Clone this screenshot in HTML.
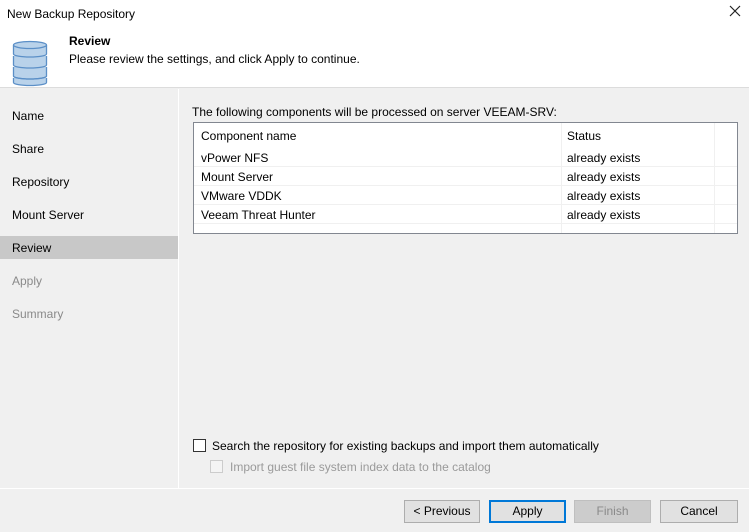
<!DOCTYPE html>
<html><head><style>
*{margin:0;padding:0;box-sizing:border-box}
body{width:749px;height:532px;overflow:hidden;background:#f0f0f0;font-family:"Liberation Sans",Arial,sans-serif;font-size:12px;color:#000;position:relative}
.a{position:absolute;white-space:nowrap}
.hdr{left:0;top:0;width:749px;height:88px;background:#fff;border-bottom:1px solid #dcdcdc}
.nav{font-size:12px}
.btn{position:absolute;top:500px;height:23px;width:78px;background:#e1e1e1;border:1px solid #adadad;text-align:center;line-height:21px;font-size:12px}
</style></head><body>
<div class="a hdr"></div>
<div class="a" style="left:7px;top:7px;font-size:12px">New Backup Repository</div>
<svg class="a" style="left:729px;top:5px" width="12" height="12" viewBox="0 0 12 12"><path d="M1 1L11 11M11 1L1 11" stroke="#222" stroke-width="1.2"/></svg>
<svg class="a" style="left:12px;top:40px" width="38" height="48" viewBox="0 0 38 48">
<g fill="#b9d2ea" stroke="#5b8fc7" stroke-width="1.3">
<path d="M1.5 38v4.5a16.5 3 0 0 0 33 0V38"/>
<path d="M1.5 27v9a16.5 3 0 0 0 33 0v-9"/>
<path d="M1.5 16v9a16.5 3 0 0 0 33 0v-9"/>
<path d="M1.5 5v9a16.5 3 0 0 0 33 0V5"/>
<ellipse cx="18" cy="5" rx="16.5" ry="3.5"/>
<path d="M1.5 36a16.5 3 0 0 0 33 0" fill="none"/>
</g></svg>
<div class="a" style="left:69px;top:34px;font-weight:bold">Review</div>
<div class="a" style="left:69px;top:52px">Please review the settings, and click Apply to continue.</div>
<div class="a" style="left:178px;top:89px;width:1px;height:399px;background:#fff"></div>
<div class="a nav" style="left:12px;top:109px">Name</div>
<div class="a nav" style="left:12px;top:142px">Share</div>
<div class="a nav" style="left:12px;top:175px">Repository</div>
<div class="a nav" style="left:12px;top:208px">Mount Server</div>
<div class="a" style="left:0;top:236px;width:178px;height:23px;background:#c8c8c8"></div>
<div class="a nav" style="left:12px;top:241px">Review</div>
<div class="a nav" style="left:12px;top:274px;color:#8a8a8a">Apply</div>
<div class="a nav" style="left:12px;top:307px;color:#8a8a8a">Summary</div>
<div class="a" style="left:192px;top:105px">The following components will be processed on server VEEAM-SRV:</div>
<div class="a" style="left:193px;top:122px;width:545px;height:112px;background:#fff;border:1px solid #828790"></div>
<div class="a" style="left:561px;top:123px;width:1px;height:110px;background:#f0f0f0"></div>
<div class="a" style="left:714px;top:123px;width:1px;height:110px;background:#f0f0f0"></div>
<div class="a" style="left:194px;top:166px;width:543px;height:1px;background:#f0f0f0"></div>
<div class="a" style="left:194px;top:185px;width:543px;height:1px;background:#f0f0f0"></div>
<div class="a" style="left:194px;top:204px;width:543px;height:1px;background:#f0f0f0"></div>
<div class="a" style="left:194px;top:223px;width:543px;height:1px;background:#f0f0f0"></div>
<div class="a" style="left:201px;top:129px">Component name</div>
<div class="a" style="left:567px;top:129px">Status</div>
<div class="a" style="left:201px;top:151px">vPower NFS</div><div class="a" style="left:567px;top:151px">already exists</div>
<div class="a" style="left:201px;top:170px">Mount Server</div><div class="a" style="left:567px;top:170px">already exists</div>
<div class="a" style="left:201px;top:189px">VMware VDDK</div><div class="a" style="left:567px;top:189px">already exists</div>
<div class="a" style="left:201px;top:208px">Veeam Threat Hunter</div><div class="a" style="left:567px;top:208px">already exists</div>
<div class="a" style="left:193px;top:439px;width:13px;height:13px;border:1px solid #333;background:#fff"></div>
<div class="a" style="left:212px;top:439px">Search the repository for existing backups and import them automatically</div>
<div class="a" style="left:210px;top:460px;width:13px;height:13px;border:1px solid #ccc;background:#f4f4f4"></div>
<div class="a" style="left:230px;top:460px;color:#9a9a9a">Import guest file system index data to the catalog</div>
<div class="a" style="left:0;top:488px;width:749px;height:1px;background:#fff"></div>
<div class="btn" style="left:404px;width:76px">&lt; Previous</div>
<div class="btn" style="left:489px;border:2px solid #0078d7;line-height:19px;width:77px">Apply</div>
<div class="btn" style="left:574px;width:77px;background:#cccccc;border-color:#bfbfbf;color:#8a8a8a">Finish</div>
<div class="btn" style="left:660px;width:78px">Cancel</div>
</body></html>
